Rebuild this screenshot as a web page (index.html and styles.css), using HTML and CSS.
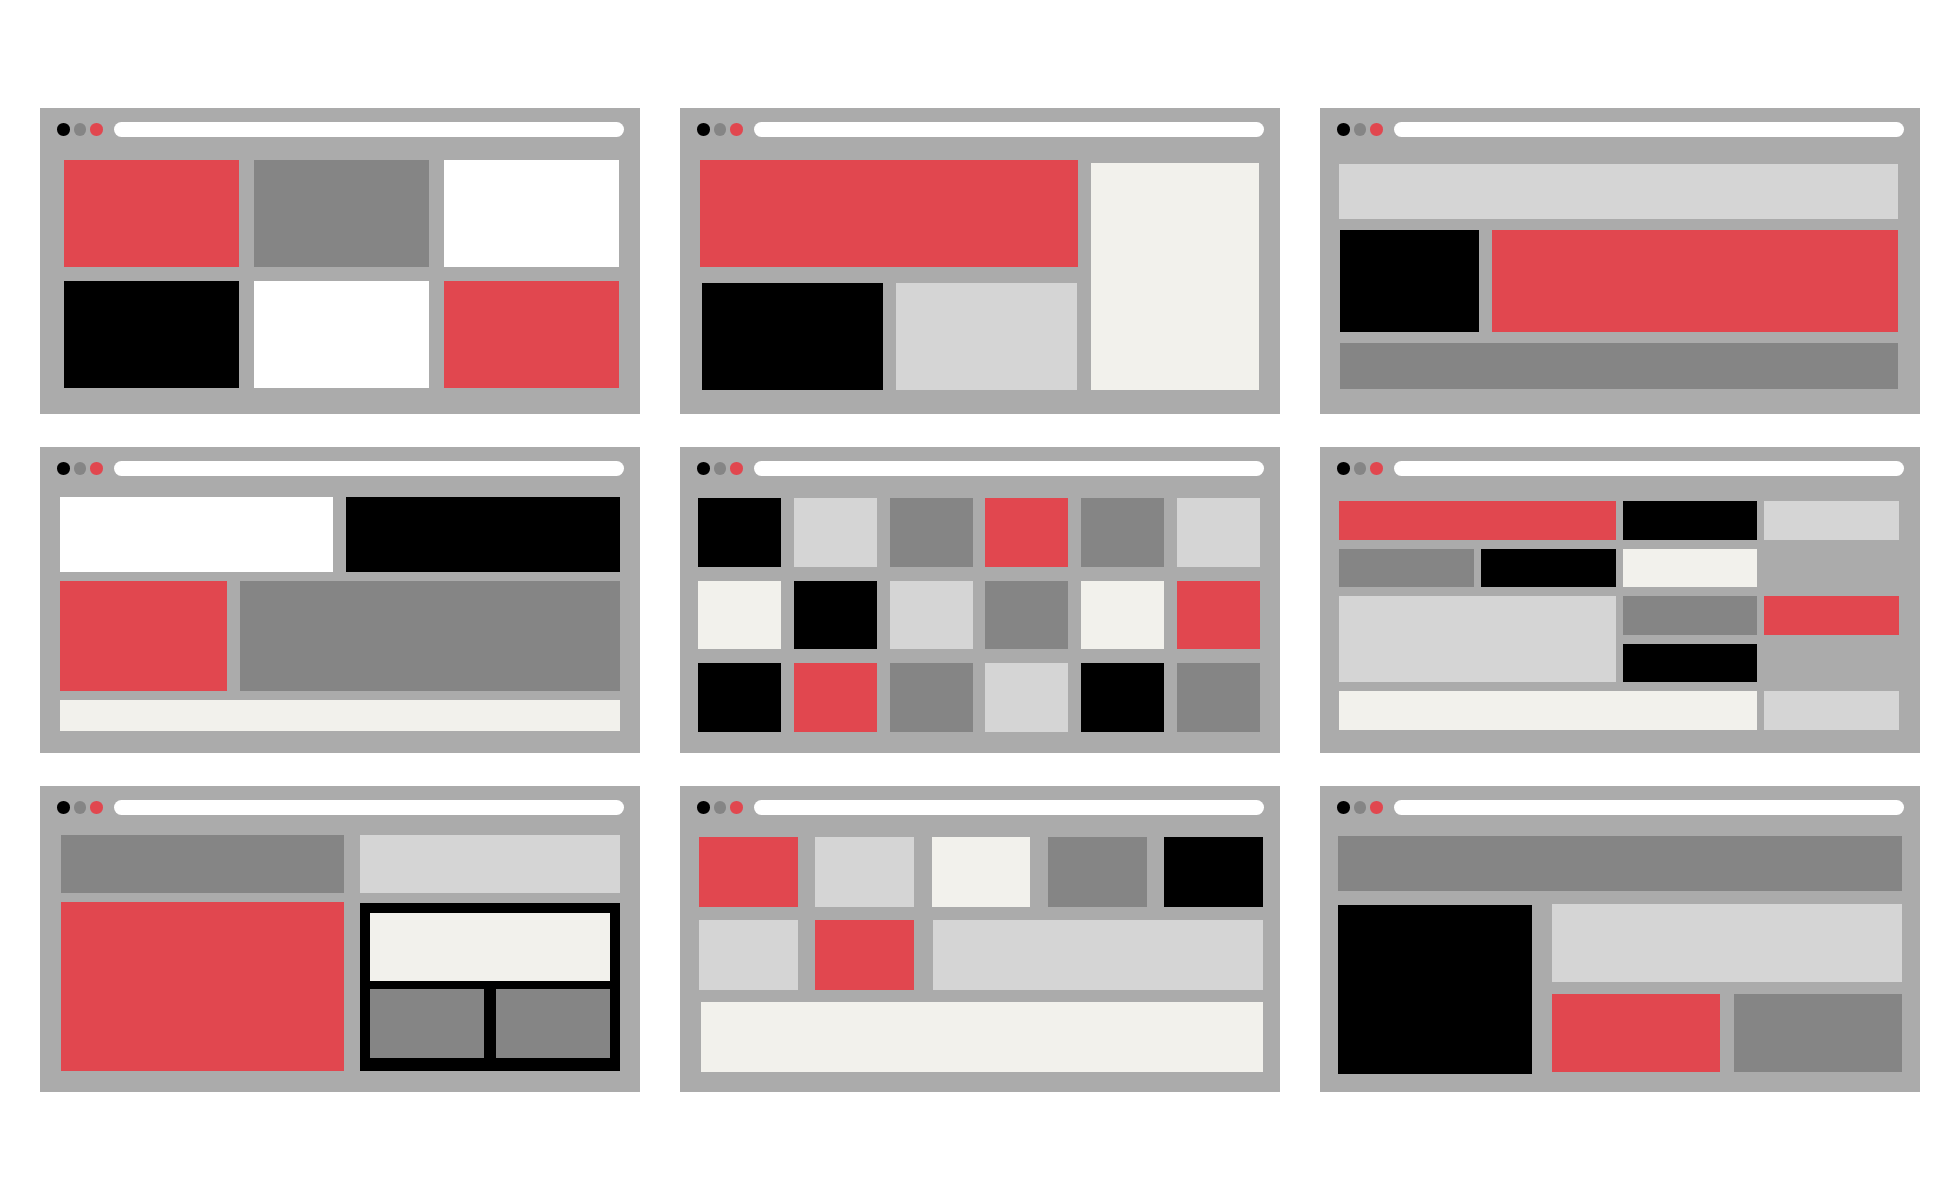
FILE: index.html
```html
<!DOCTYPE html>
<html lang="en">
<head>
<meta charset="utf-8">
<title>Layout wireframes</title>
<link rel="stylesheet" href="styles.css">
</head>
<body>
<main class="sheet">

  <section class="win">
    <div class="chrome"><span class="dot k"></span><span class="dot g"></span><span class="dot r"></span><span class="url"></span></div>
    <div class="body p1">
      <div class="red"></div><div class="dark"></div><div class="white"></div>
      <div class="black"></div><div class="white"></div><div class="red"></div>
    </div>
  </section>

  <section class="win">
    <div class="chrome"><span class="dot k"></span><span class="dot g"></span><span class="dot r"></span><span class="url"></span></div>
    <div class="body p2">
      <div class="red hero"></div>
      <div class="off side"></div>
      <div class="black shift"></div>
      <div class="light"></div>
    </div>
  </section>

  <section class="win">
    <div class="chrome"><span class="dot k"></span><span class="dot g"></span><span class="dot r"></span><span class="url"></span></div>
    <div class="body p3">
      <div class="light full"></div>
      <div class="black"></div>
      <div class="red"></div>
      <div class="dark full"></div>
    </div>
  </section>

  <section class="win">
    <div class="chrome"><span class="dot k"></span><span class="dot g"></span><span class="dot r"></span><span class="url"></span></div>
    <div class="body p4">
      <div class="row r1"><div class="white"></div><div class="black"></div></div>
      <div class="row r2"><div class="red"></div><div class="dark"></div></div>
      <div class="row r3"><div class="off"></div></div>
    </div>
  </section>

  <section class="win">
    <div class="chrome"><span class="dot k"></span><span class="dot g"></span><span class="dot r"></span><span class="url"></span></div>
    <div class="body p5">
      <div class="black"></div><div class="light"></div><div class="dark"></div><div class="red"></div><div class="dark"></div><div class="light"></div>
      <div class="off"></div><div class="black"></div><div class="light"></div><div class="dark"></div><div class="off"></div><div class="red"></div>
      <div class="black"></div><div class="red"></div><div class="dark"></div><div class="light"></div><div class="black"></div><div class="dark"></div>
    </div>
  </section>

  <section class="win">
    <div class="chrome"><span class="dot k"></span><span class="dot g"></span><span class="dot r"></span><span class="url"></span></div>
    <div class="body p6">
      <div class="red span2"></div><div class="black"></div><div class="light"></div>
      <div class="dark"></div><div class="black"></div><div class="off"></div><div class="empty"></div>
      <div class="light big"></div><div class="dark"></div><div class="red"></div>
      <div class="black"></div><div class="empty"></div>
      <div class="off span3"></div><div class="light"></div>
    </div>
  </section>

  <section class="win">
    <div class="chrome"><span class="dot k"></span><span class="dot g"></span><span class="dot r"></span><span class="url"></span></div>
    <div class="body p7">
      <div class="dark"></div>
      <div class="light"></div>
      <div class="red"></div>
      <div class="frame">
        <div class="off wide"></div>
        <div class="dark"></div>
        <div class="dark"></div>
      </div>
    </div>
  </section>

  <section class="win">
    <div class="chrome"><span class="dot k"></span><span class="dot g"></span><span class="dot r"></span><span class="url"></span></div>
    <div class="body p8">
      <div class="red"></div><div class="light"></div><div class="off"></div><div class="dark"></div><div class="black"></div>
      <div class="light"></div><div class="red"></div><div class="light span3"></div>
      <div class="off all"></div>
    </div>
  </section>

  <section class="win">
    <div class="chrome"><span class="dot k"></span><span class="dot g"></span><span class="dot r"></span><span class="url"></span></div>
    <div class="body p9">
      <div class="dark top"></div>
      <div class="black tall"></div>
      <div class="light banner"></div>
      <div class="red"></div>
      <div class="dark"></div>
    </div>
  </section>

</main>
</body>
</html>
```

FILE: styles.css
```css
* { box-sizing: border-box; }

html, body {
  margin: 0;
  padding: 0;
  background: #ffffff;
}

body {
  width: 1960px;
  height: 1200px;
  font-family: "Liberation Sans", Arial, sans-serif;
}

.sheet {
  display: grid;
  grid-template-columns: repeat(3, 600px);
  grid-auto-rows: 306px;
  column-gap: 40px;
  row-gap: 33px;
  padding: 108px 40px 0 40px;
}

.win {
  background: #ababab;
  display: flex;
  flex-direction: column;
}

.chrome {
  display: flex;
  align-items: center;
  height: 15px;
  margin: 14px 16px 0 17px;
}

.dot {
  width: 12.7px;
  height: 12.5px;
  border-radius: 50%;
  margin-right: 4px;
  flex: none;
}
.dot.k { background: #000000; }
.dot.g { background: #858585; }
.dot.r { background: #e1474f; margin-right: 10.5px; }

.url {
  flex: 1;
  height: 15px;
  background: #ffffff;
  border-radius: 8px;
}

/* colours */
.red   { background: #e1474f; }
.dark  { background: #858585; }
.black { background: #000000; }
.white { background: #ffffff; }
.light { background: #d5d5d5; }
.off   { background: #f2f1ec; }
.empty { background: transparent; }

.body {
  flex: 1;
}

/* panel 1 : 3 x 2 grid */
.p1 {
  display: grid;
  grid-template-columns: repeat(3, 1fr);
  grid-template-rows: repeat(2, 1fr);
  column-gap: 15px;
  row-gap: 14px;
  margin: 23px 21px 26px 24px;
}

/* panel 2 */
.p2 {
  display: grid;
  grid-template-columns: 183px 182px 1fr;
  grid-template-rows: 107px 107px;
  column-gap: 13px;
  row-gap: 16px;
  margin: 23px 21px 24px 20px;
}
.p2 .hero { grid-column: 1 / 3; }
.p2 .side { grid-column: 3; grid-row: 1 / 3; margin-top: 3px; }
.p2 .shift { margin-left: 2px; }
.p2 .light { margin-right: 1px; }

/* panel 3 */
.p3 {
  display: grid;
  grid-template-columns: 140px 1fr;
  grid-template-rows: 55px 102px 46px;
  column-gap: 13px;
  row-gap: 11px;
  margin: 27px 22px 25px 19px;
}
.p3 .full { grid-column: 1 / 3; }
.p3 .black { margin-left: 1px; }
.p3 .dark { margin-left: 1px; }

/* panel 4 */
.p4 {
  display: flex;
  flex-direction: column;
  gap: 9px;
  margin: 21px 20px 22px 19.5px;
}
.p4 .row { display: flex; gap: 13px; }
.p4 .row > div { flex: 1; }
.p4 .r1 { height: 75px; }
.p4 .r2 { height: 110px; }
.p4 .r2 > .red { flex: none; width: 167px; }
.p4 .r3 { flex: 1; }

/* panel 5 : 6 x 3 tiles */
.p5 {
  display: grid;
  grid-template-columns: repeat(6, 1fr);
  grid-template-rows: repeat(3, 1fr);
  column-gap: 12.6px;
  row-gap: 14px;
  margin: 22px 20px 21px 18px;
}

/* panel 6 */
.p6 {
  display: grid;
  grid-template-columns: repeat(4, 1fr);
  grid-template-rows: repeat(5, 1fr);
  column-gap: 7px;
  row-gap: 9px;
  margin: 25px 21px 23px 19px;
}
.p6 .span2 { grid-column: span 2; }
.p6 .span3 { grid-column: span 3; }
.p6 .big { grid-column: 1 / 3; grid-row: 3 / 5; }

/* panel 7 */
.p7 {
  display: grid;
  grid-template-columns: 283px 1fr;
  grid-template-rows: 58px 1fr;
  column-gap: 16px;
  row-gap: 9px;
  margin: 20px 20px 21px 21px;
}
.p7 .frame {
  background: #000000;
  padding: 10px 10px 13px 10px;
  display: grid;
  grid-template-columns: 1fr 1fr;
  grid-template-rows: 68px 1fr;
  column-gap: 12px;
  row-gap: 8px;
  margin-top: 1px;
}
.p7 .frame .wide { grid-column: 1 / 3; }

/* panel 8 */
.p8 {
  display: grid;
  grid-template-columns: repeat(5, 1fr);
  grid-template-rows: repeat(3, 70px);
  column-gap: 17.5px;
  row-gap: 12.5px;
  margin: 22px 17px 20px 19px;
}
.p8 .span3 { grid-column: span 3; margin-left: 1.5px; }
.p8 .all { grid-column: 1 / 6; margin-left: 2.4px; }

/* panel 9 */
.p9 {
  display: grid;
  grid-template-columns: 194px 168px 1fr;
  grid-template-rows: 55px 78px 78px;
  column-gap: 20px;
  row-gap: 12.5px;
  margin: 21px 18px 18px 18px;
}
.p9 .top { grid-column: 1 / 4; }
.p9 .tall { grid-row: 2 / 4; margin-top: 1px; margin-bottom: -2px; }
.p9 .banner { grid-column: 2 / 4; }
.p9 .red + .dark { margin-left: -6px; }
```
